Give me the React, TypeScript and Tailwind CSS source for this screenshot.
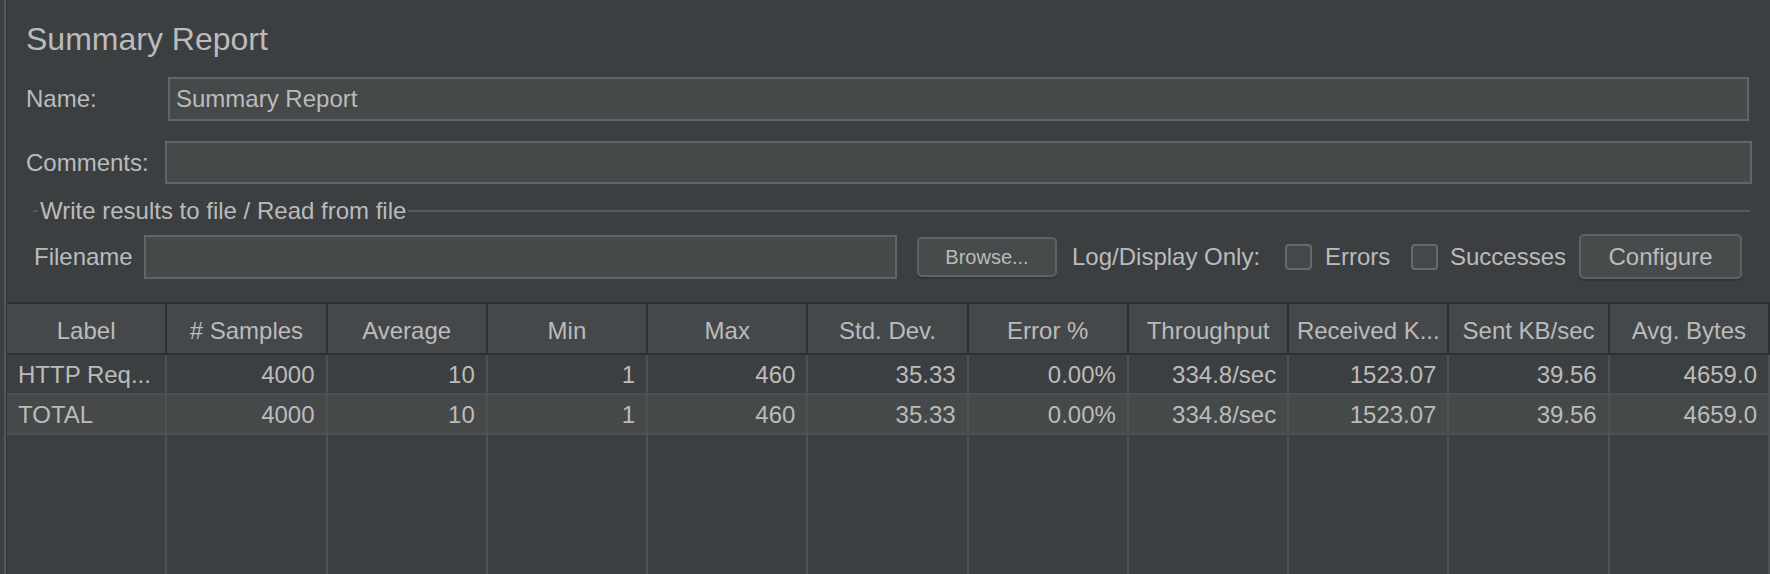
import React from "react"

const columns = [
  "Label",
  "# Samples",
  "Average",
  "Min",
  "Max",
  "Std. Dev.",
  "Error %",
  "Throughput",
  "Received K...",
  "Sent KB/sec",
  "Avg. Bytes",
]

const rows = [
  ["HTTP Req...", "4000", "10", "1", "460", "35.33", "0.00%", "334.8/sec", "1523.07", "39.56", "4659.0"],
  ["TOTAL", "4000", "10", "1", "460", "35.33", "0.00%", "334.8/sec", "1523.07", "39.56", "4659.0"],
]

function Checkbox() {
  return <div className="h-[26px] w-[27px] shrink-0 rounded-[4px] border-2 border-[#676a6b] bg-[#43494a]" />
}

export default function App() {
  return (
    <div className="flex h-[574px] w-[1770px] overflow-hidden bg-[#3c3f41] font-['Liberation_Sans',Arial,sans-serif] text-[#bbbbbb]">
      {/* left splitter edge */}
      <div className="w-[4px] shrink-0" />
      <div className="w-[2px] shrink-0 bg-[#545759]" />
      <div className="w-px shrink-0 bg-[#323435]" />

      <div className="flex min-w-0 flex-1 flex-col">
        {/* title */}
        <div className="mt-[23px] h-[32px] pl-[19px] text-[32px] leading-[32px]">Summary Report</div>

        {/* name */}
        <div className="mt-[22px] flex h-[44px] items-center pl-[19px] pr-[21px] text-[24px]">
          <div className="w-[142px] shrink-0">Name:</div>
          <div className="flex h-full flex-1 items-center border-2 border-[#646464] bg-[#45494a] pl-[6px]">
            Summary Report
          </div>
        </div>

        {/* comments */}
        <div className="mt-[20px] flex h-[43px] items-center pl-[19px] pr-[18px] text-[24px]">
          <div className="w-[139px] shrink-0">Comments:</div>
          <div className="h-full flex-1 border-2 border-[#646464] bg-[#45494a]" />
        </div>

        {/* write results fieldset */}
        <div className="mt-[15px] flex h-[24px] items-center pl-[26px] pr-[20px] text-[24px] leading-[24px]">
          <div className="h-[2px] w-[5px] bg-[#575a5c]" />
          <span className="px-[2px]">Write results to file / Read from file</span>
          <div className="h-[2px] flex-1 bg-[#575a5c]" />
        </div>

        <div className="mt-[11px] flex h-[45px] items-center pl-[27px] text-[24px]">
          <div className="w-[110px] shrink-0">Filename</div>
          <div className="h-[44px] w-[753px] shrink-0 border-2 border-[#646464] bg-[#45494a]" />
          <button className="ml-[20px] flex h-[40px] w-[140px] shrink-0 items-center justify-center rounded-[5px] border-2 border-[#5e6263] bg-[#464b4b] text-[20px] text-[#bbbbbb] shadow-[0_2px_0_#333536]">
            Browse...
          </button>
          <span className="ml-[15px] w-[190px] shrink-0 whitespace-nowrap">Log/Display Only:</span>
          <div className="ml-[23px]">
            <Checkbox />
          </div>
          <span className="ml-[13px] w-[62px] shrink-0 whitespace-nowrap">Errors</span>
          <div className="ml-[24px]">
            <Checkbox />
          </div>
          <span className="ml-[12px] w-[113px] shrink-0 whitespace-nowrap">Successes</span>
          <button className="ml-[16px] flex h-[45px] w-[163px] shrink-0 items-center justify-center rounded-[5px] border-2 border-[#5e6263] bg-[#464b4b] text-[24px] text-[#bbbbbb] shadow-[0_2px_0_#333536]">
            Configure
          </button>
        </div>

        {/* results table */}
        <div className="mt-[23px] flex flex-1 flex-col border-t-2 border-[#2e3032] text-[24px]">
          <div className="grid h-[51px] grid-cols-11 border-b-2 border-[#2e3032] bg-[#45484a]">
            {columns.map((c) => (
              <div key={c} className="flex items-center justify-center overflow-hidden whitespace-nowrap border-r-2 border-[#2e3032] pt-[4px]">
                {c}
              </div>
            ))}
          </div>
          {rows.map((r, i) => (
            <div
              key={i}
              className={`grid h-[40px] grid-cols-11 border-b-2 border-[#4d5153] ${i === 1 ? "bg-[#45494a]" : "bg-[#3c3f41]"}`}
            >
              {r.map((v, j) => (
                <div
                  key={j}
                  className={`flex items-center overflow-hidden whitespace-nowrap border-r-2 border-[#4d5153] pt-px ${j === 0 ? "justify-start pl-[11px]" : "justify-end pr-[11px]"}`}
                >
                  {v}
                </div>
              ))}
            </div>
          ))}
          <div className="grid flex-1 grid-cols-11">
            {columns.map((c) => (
              <div key={c} className="border-r-2 border-[#4d5153]" />
            ))}
          </div>
        </div>
      </div>
    </div>
  )
}
